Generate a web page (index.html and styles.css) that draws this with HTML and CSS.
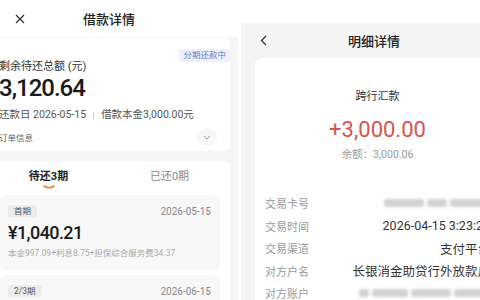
FILE: index.html
```html
<!DOCTYPE html>
<html>
<head>
	<title>借款详情</title>
	<link rel="stylesheet" href="styles.css">
</head>
<body>
<div class="screen">
	<div class="loan">
		<div class="loan-head">
			<span class="close"><svg width="10" height="10" viewBox="0 0 10 10"><path d="M1 1L9 9M9 1L1 9" stroke="#333" stroke-width="1.3" fill="none"/></svg></span>
			<h1>借款详情</h1>
			<span></span>
		</div>
		<div class="card summary">
			<span class="status">分期还款中</span>
			<p class="label">剩余待还总额 (元)</p>
			<p class="total">3,120.64</p>
			<p class="meta">还款日 2026-05-15<i class="sep"></i>借款本金3,000.00元</p>
			<div class="order">
				<span>订单信息</span>
				<span class="more"><svg width="8" height="5" viewBox="0 0 8 5"><path d="M1 1L4 4L7 1" stroke="#999" stroke-width="1" fill="none"/></svg></span>
			</div>
		</div>
		<div class="card plan">
			<div class="tabs">
				<span class="tab on">待还3期<svg width="12" height="4" viewBox="0 0 12 4"><path d="M1 1Q6 4.5 11 1" stroke="#f0782a" stroke-width="1.6" fill="none" stroke-linecap="round"/></svg></span>
				<span class="tab">已还0期</span>
			</div>
			<div class="term">
				<div class="term-top"><span class="tag">首期</span><span class="date">2026-05-15</span></div>
				<p class="amount">¥1,040.21</p>
				<p class="parts">本金997.09+利息8.75+担保综合服务费34.37</p>
			</div>
			<div class="term">
				<div class="term-top"><span class="tag">2/3期</span><span class="date">2026-06-15</span></div>
			</div>
		</div>
	</div>

	<div class="detail">
		<div class="bar"></div>
		<div class="detail-head">
			<span class="back"><svg width="7" height="11" viewBox="0 0 7 11"><path d="M6 1L1.5 5.5L6 10" stroke="#333" stroke-width="1.3" fill="none"/></svg></span>
			<h1>明细详情</h1>
			<span></span>
		</div>
		<div class="card record">
			<p class="kind">跨行汇款</p>
			<p class="sum">+3,000.00</p>
			<p class="balance">余额：3,000.06</p>
			<ul class="rows">
				<li><span>交易卡号</span><b class="hidden"><i class="w40"></i><i class="w20"></i><i class="w40"></i></b></li>
				<li><span>交易时间</span><b>2026-04-15 3:23:27</b></li>
				<li><span>交易渠道</span><b>支付平台</b></li>
				<li><span>对方户名</span><b>长银消金助贷行外放款户</b></li>
				<li><span>对方账户</span><b class="hidden"><i class="w10"></i><i class="w36"></i><i class="w40"></i><i class="w36"></i></b></li>
			</ul>
		</div>
	</div>
</div>
</body>
</html>
```

FILE: styles.css
```css
body,p,h1,ul,li{
	margin:0;
	padding:0;
}
li{
	list-style: none;
}
body{
	width:480px;
	height:300px;
	overflow: hidden;
	background:#fff;
	font-family: Roboto, "Noto Sans CJK SC", sans-serif;
	color:#222;
}
.screen{
	display: flex;
	height:300px;
	overflow: hidden;
}

/* left: loan detail */
.loan{
	width:258px;
	margin-left:-20px;
	flex-shrink: 0;
	background:#f5f5f5;
	overflow: hidden;
}
.loan-head{
	height:37px;
	background:#fff;
	display: grid;
	grid-template-columns: 1fr auto 1fr;
	align-items: center;
}
.loan-head h1,
.detail-head h1{
	font-size:13px;
	font-weight:500;
	color:#222;
}
.close{
	padding-left:35px;
	display: flex;
}
.card{
	background:#fff;
	border-radius: 6px;
	margin:0 8px;
}
.summary{
	position: relative;
	padding:22px 11px 4px;
	margin-top:1px;
}
.status{
	position: absolute;
	top:11px;
	right:0;
	font-size:8.5px;
	line-height:13px;
	padding:0 4px;
	color:#6179c4;
	background:#edf1fc;
	border-radius: 2px;
}
.label{
	font-size:11px;
	line-height:14px;
	color:#333;
}
.total{
	font-size:24px;
	font-weight:500;
	letter-spacing:-1px;
	line-height:28px;
	color:#1a1a1a;
}
.meta{
	margin-top:6px;
	font-size:10.5px;
	line-height:14px;
	color:#555;
	display: flex;
	align-items: center;
}
.sep{
	width:1px;
	height:7px;
	background:#ccc;
	margin:0 7px;
}
.order{
	margin-top:5px;
	height:20px;
	display: flex;
	justify-content: space-between;
	align-items: center;
	font-size:8.5px;
	color:#666;
}
.more{
	width:20px;
	height:18px;
	border-radius: 9px;
	background:#f7f7f7;
	display: flex;
	justify-content: center;
	align-items: center;
	margin-right:2px;
}
.plan{
	margin-top:10px;
	height:200px;
}
.tabs{
	display: flex;
	height:34px;
	padding-top:9px;
	box-sizing: border-box;
}
.tab{
	flex:1;
	display: flex;
	flex-direction: column;
	align-items: center;
	font-size:11px;
	line-height:14px;
	color:#888;
}
.tab.on{
	color:#222;
	font-weight:bold;
}
.tab svg{
	margin-top:1px;
}
.term{
	margin:0 10px 5px 12px;
	background:#f8f8f8;
	border-radius: 6px;
	padding:10px 9px 0 8px;
	height:65px;
}
.term-top{
	display: flex;
	justify-content: space-between;
	align-items: center;
}
.tag{
	font-size:8.5px;
	line-height:12px;
	padding:0 6px;
	background:#ececec;
	color:#555;
	border-radius: 2px;
}
.date{
	font-size:10px;
	color:#888;
}
.amount{
	margin-top:4px;
	font-size:18px;
	font-weight:500;
	letter-spacing:-0.6px;
	line-height:24px;
	color:#1a1a1a;
}
.parts{
	margin-top:2px;
	font-size:8.5px;
	line-height:12px;
	color:#aaa;
}

/* right: transfer detail */
.detail{
	width:266px;
	margin-left:3px;
	flex-shrink: 0;
	background:#f4f4f4;
}
.bar{
	height:23px;
	background:#fff;
}
.detail-head{
	height:35px;
	display: grid;
	grid-template-columns: 1fr auto 1fr;
	align-items: center;
}
.back{
	padding-left:19px;
	display: flex;
}
.record{
	margin:0 12px 0 14px;
	height:242px;
	padding:32px 5px 0 10px;
	text-align: center;
}
.kind{
	font-size:11px;
	line-height:14px;
	color:#333;
}
.sum{
	margin-top:12px;
	font-size:22px;
	line-height:28px;
	color:#d9534f;
}
.balance{
	margin-top:4px;
	font-size:10.5px;
	line-height:14px;
	color:#999;
}
.rows{
	margin-top:30px;
}
.rows li{
	height:22.5px;
	display: flex;
	justify-content: space-between;
	align-items: center;
	font-size:11px;
	color:#999;
}
.rows b{
	font-weight: normal;
	font-size:12.5px;
	color:#333;
}
.hidden{
	display: flex;
	gap:3px;
}
.hidden i{
	height:8px;
	background:#d2d2d2;
	border-radius: 3px;
	filter: blur(1.5px);
}
.w10{ width:10px; }
.w20{ width:20px; }
.w36{ width:36px; }
.w40{ width:40px; }
```
